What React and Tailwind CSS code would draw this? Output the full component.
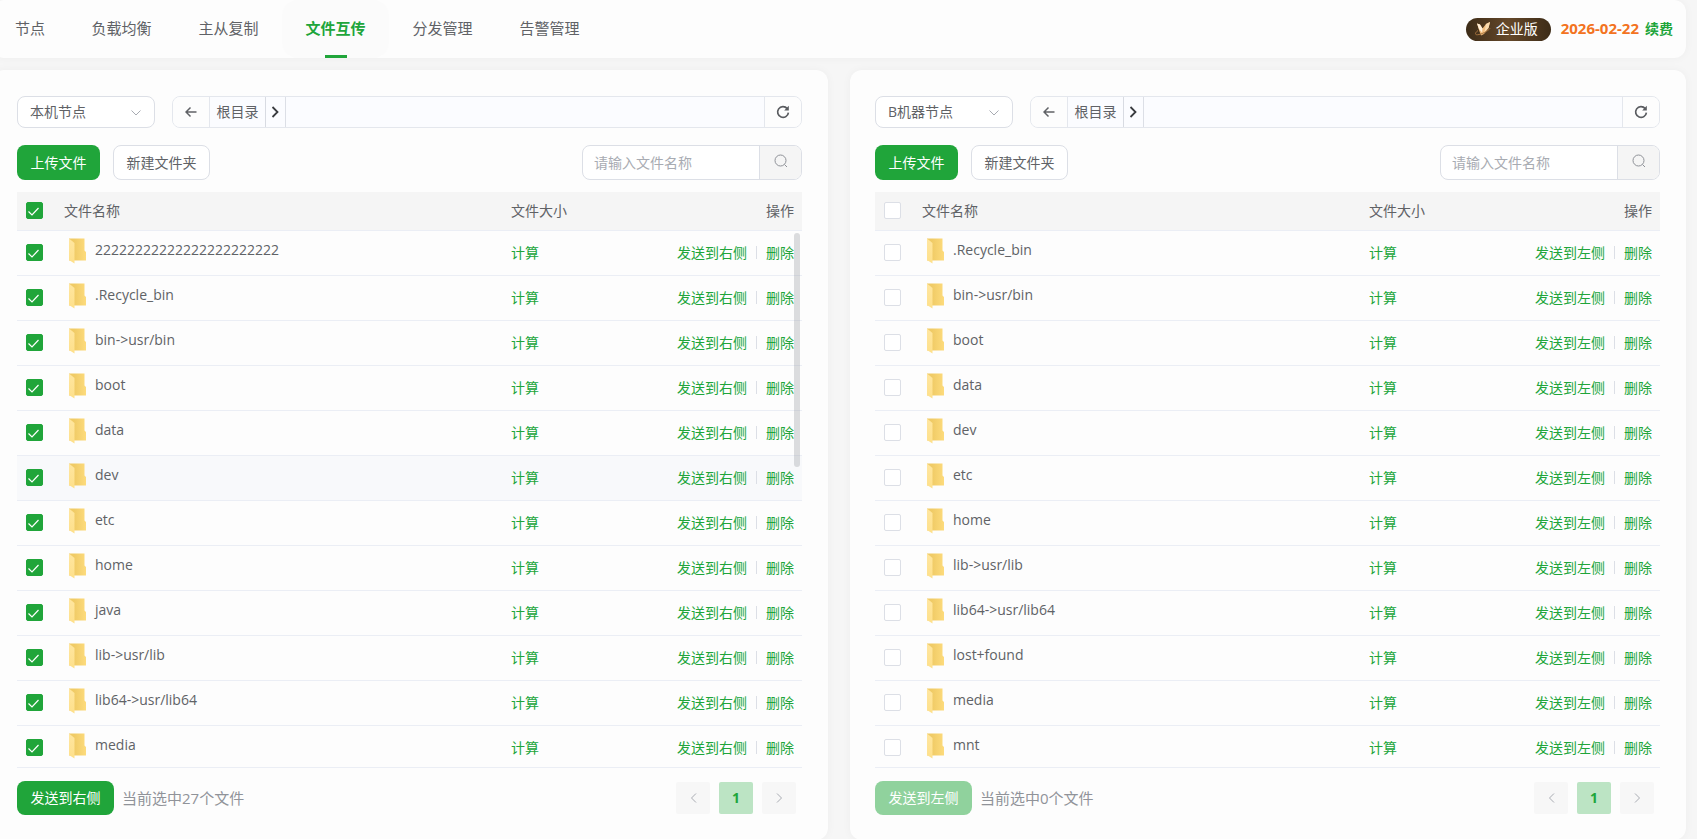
import React from 'react';

const leftFiles = [
    '22222222222222222222222', '.Recycle_bin', 'bin->usr/bin', 'boot', 'data', 'dev', 'etc',
    'home', 'java', 'lib->usr/lib', 'lib64->usr/lib64', 'media',
];

const rightFiles = [
    '.Recycle_bin', 'bin->usr/bin', 'boot', 'data', 'dev', 'etc', 'home',
    'lib->usr/lib', 'lib64->usr/lib64', 'lost+found', 'media', 'mnt',
];

const tabs = ['节点', '负载均衡', '主从复制', '文件互传', '分发管理', '告警管理'];

const FolderIcon = () => (
    <svg className="shrink-0" width="18" height="26" viewBox="0 0 18 26" aria-hidden="true">
        <defs>
            <linearGradient id="folderBack" x1="0" y1="0" x2="1" y2="0">
                <stop offset="0.3" stopColor="#f0cb66" />
                <stop offset="1" stopColor="#fddb7c" />
            </linearGradient>
            <linearGradient id="folderFront" x1="0" y1="0" x2="0" y2="1">
                <stop offset="0" stopColor="#ffe6a0" />
                <stop offset="1" stopColor="#fee08a" />
            </linearGradient>
        </defs>
        <path d="M0 0.500h15.500v12l1.500 1.500v8.500H0z" fill="url(#folderBack)" />
        <path d="M0 0.500L5.500 5v20.500L0 22z" fill="url(#folderFront)" />
    </svg>
);

const Checkbox = ({ id, checked, label }) => (
    <span className="relative block h-[17px] w-[17px]">
        <input
            id={id}
            type="checkbox"
            defaultChecked={checked}
            aria-label={label}
            className="peer block h-[17px] w-[17px] appearance-none rounded-[2px] border border-[#dcdfe6] bg-white checked:border-[#20a53a] checked:bg-[#20a53a]"
        />
        <svg className="pointer-events-none absolute inset-0 hidden peer-checked:block" width="17" height="17" viewBox="0 0 17 17" fill="none" stroke="#fff" strokeWidth="1.2">
            <path d="M2.500 9.500l3.500 3.500 6.500-7" />
        </svg>
    </span>
);

const Panel = ({ id, node, files, checked, hovered, action, count, scroll }) => (
    <section className="rounded-xl bg-[#fdfdfd] pt-[26px] pr-[26px] pb-[25px] pl-[25px] shadow-[0_0_10px_rgba(0,0,0,0.04)]">
        {/* Path bar */}
        <div className="flex h-8 gap-[17px]">
            <div className="relative w-[138px] shrink-0">
                <select aria-label="节点" className="h-8 w-full appearance-none rounded-lg border border-[#dcdfe6] bg-white pr-8 pl-3 text-sm text-[#606266]">
                    <option>{node}</option>
                </select>
                <svg className="pointer-events-none absolute top-3 right-[14px] h-[10px] w-[10px]" viewBox="0 0 10 10" fill="none" stroke="#a8abb2">
                    <path d="M0.500 2.500L5 7l4.500-4.500" />
                </svg>
            </div>
            <div className="flex min-w-0 flex-1 overflow-hidden rounded-lg border border-[#e4e7ed] bg-[#fbfcff] text-[#606266]">
                <button aria-label="返回" className="flex w-[37px] items-center justify-center border-r border-[#e4e7ed] bg-[#fdfdfd]">
                    <svg width="12" height="12" viewBox="0 0 12 12" fill="none" stroke="#606266" strokeWidth="1.5">
                        <path d="M11.500 6H1.500M5.500 1.500L1 6l4.500 4.500" />
                    </svg>
                </button>
                <button className="w-14 border-r border-[#d8dbe2] text-sm">根目录</button>
                <button aria-label="展开" className="flex w-5 items-center justify-center border-r border-[#dcdfe6] pr-px">
                    <svg width="8" height="12" viewBox="0 0 8 12" fill="none" stroke="#3a3c40" strokeWidth="1.8">
                        <path d="M1.500 1L6.500 6l-5 5" />
                    </svg>
                </button>
                <button aria-label="刷新" className="ml-auto flex w-[37px] items-center justify-center border-l border-[#e4e7ed] bg-[#fdfdfd]">
                    <svg width="14" height="14" viewBox="0 0 14 14" fill="none" stroke="#5a5c60" strokeWidth="1.7">
                        <path d="M11.200 3.600A5.400 5.400 0 1 0 12.400 7.600" />
                        <path d="M12.800 0.800v4.700H8.200z" fill="#5a5c60" stroke="none" />
                    </svg>
                </button>
            </div>
        </div>

        {/* Actions */}
        <div className="mt-[17px] flex h-[35px] text-sm">
            <button className="w-[83px] rounded-lg bg-[#20a53a] text-white">上传文件</button>
            <button className="ml-[13px] w-[97px] rounded-lg border border-[#dcdfe6] bg-white text-[#606266]">新建文件夹</button>
            <div className="ml-auto flex w-[220px] overflow-hidden rounded-lg border border-[#dcdfe6] bg-white">
                <input type="text" aria-label="搜索文件" placeholder="请输入文件名称" className="min-w-0 flex-1 pl-[11px] outline-none placeholder:text-[#a8abb2]" />
                <button aria-label="搜索" className="flex w-[42px] items-center justify-center border-l border-[#dcdfe6] bg-[#f5f5f5] pb-1">
                    <svg width="14" height="14" viewBox="0 0 14 14" fill="none" stroke="#8f9298">
                        <circle cx="6.500" cy="6.500" r="5.500" />
                        <path d="M10.500 10.500l2.500 2.500" />
                    </svg>
                </button>
            </div>
        </div>

        {/* File list */}
        <div className="relative mt-3 h-[576px] overflow-hidden border-b border-[#ebeef5] text-sm text-[#606266]">
            <table className="w-full table-fixed border-collapse">
                <thead>
                    <tr className="h-[38px] border-b border-[#ebeef5] bg-[#f5f5f5] text-left">
                        <th className="w-[47px] pl-[9px]"><Checkbox checked={checked} label="全选" /></th>
                        <th className="font-normal">文件名称</th>
                        <th className="w-[120px] font-normal">文件大小</th>
                        <th className="w-[171px] pr-2 text-right font-normal">操作</th>
                    </tr>
                </thead>
                <tbody>
                    {files.map((name) => (
                        <tr key={name} className={name === hovered ? 'h-[45px] border-b border-[#ebeef5] bg-[#f8f9fb]' : 'h-[45px] border-b border-[#ebeef5]'}>
                            <td className="pl-[9px]"><Checkbox id={id + name} checked={checked} /></td>
                            <td>
                                <div className="flex gap-2 pb-1 pl-[5px]">
                                    <FolderIcon />
                                    <label htmlFor={id + name} className="leading-6">{name}</label>
                                </div>
                            </td>
                            <td className="text-[#20a53a]"><button>计算</button></td>
                            <td className="pr-2 text-[#20a53a]">
                                <div className="flex items-center justify-end">
                                    <button>{action}</button>
                                    <span className="mx-[9px] h-[13px] w-px bg-[#dcdfe6]" />
                                    <button>删除</button>
                                </div>
                            </td>
                        </tr>
                    ))}
                </tbody>
            </table>
            {scroll && <div className="absolute top-[41px] right-[2px] h-[234px] w-[6px] rounded-full bg-[#909399]/30" />}
        </div>

        {/* Footer */}
        <div className="mt-[13px] flex items-center">
            <button disabled={!checked} className="h-[34px] w-[97px] rounded-lg bg-[#20a53a] text-sm text-white disabled:bg-[#90d29d]">{action}</button>
            <span className="ml-2 text-[15px] text-[#909399]">当前选中{count}个文件</span>
            <nav aria-label="分页" className="mr-[6px] ml-auto flex gap-[9px]">
                <button aria-label="上一页" className="flex h-8 w-[34px] items-center justify-center rounded-[2px] bg-[#f7f7f7]">
                    <svg width="7" height="10" viewBox="0 0 7 10" fill="none" stroke="#a8abb2"><path d="M6 0.500L1.500 5 6 9.500" /></svg>
                </button>
                <button className="h-8 w-[34px] rounded-[2px] bg-[#bce4c4] text-sm font-bold text-[#20a53a]">1</button>
                <button aria-label="下一页" className="flex h-8 w-[34px] items-center justify-center rounded-[2px] bg-[#f7f7f7]">
                    <svg width="7" height="10" viewBox="0 0 7 10" fill="none" stroke="#a8abb2"><path d="M1 0.500L5.500 5 1 9.500" /></svg>
                </button>
            </nav>
        </div>
    </section>
);

const App = () => {
    return (
        <div className="min-h-screen overflow-hidden bg-[#f6f6f6] font-['Open_Sans','Noto_Sans_CJK_SC',sans-serif]">
            <div className="mr-[11px] -ml-2">
                {/* Top navigation */}
                <header className="flex h-[58px] items-center justify-between rounded-xl bg-[#fdfdfd] shadow-[0_0_10px_rgba(0,0,0,0.04)]">
                    <nav className="flex h-full text-[15px] text-[#606266]">
                        {tabs.map((tab) => {
                            if (tab === '文件互传') {
                                return (
                                    <a key={tab} href="#" className="flex h-full w-[107px] flex-col items-center rounded-2xl bg-[#fbfbfb] font-bold text-[#20a53a]">
                                        <span className="flex flex-1 items-center pt-px">{tab}</span>
                                        <span className="h-[3px] w-[22px] bg-[#20a53a]" />
                                    </a>
                                );
                            }
                            return (
                                <a key={tab} href="#" className={tab === '节点' ? 'flex w-[76px] items-center justify-center pb-[2px]' : 'flex w-[107px] items-center justify-center pb-[2px]'}>
                                    {tab}
                                </a>
                            );
                        })}
                    </nav>
                    <div className="flex items-center pr-[13px] text-sm">
                        <span className="flex h-[23px] w-[85px] items-center gap-1 rounded-full bg-linear-to-r from-[#3d2c18] via-[#65482a] to-[#3d2c18] pl-2 text-white">
                            <svg width="18" height="16" viewBox="0 0 18 16" aria-hidden="true">
                                <path d="M3 2.500l3 1 2.500 4L12 3l4-2-1.500 6-4.500 6-3 1.500L5 9z" fill="#f2bd7e" />
                                <path d="M3 2.500l3 1 2.500 4-.5 4L5 8z" fill="#fff0da" />
                                <path d="M12 3l4-2-1.500 6-4 4z" fill="#fbdcb0" />
                                <path d="M4 9.500c-4 3-3 5 1 4 5-1 11-5 11-6.500" fill="none" stroke="#a8743f" />
                            </svg>
                            企业版
                        </span>
                        <span className="ml-[10px] text-[15px] font-bold text-[#f37321]">2026-02-22</span>
                        <a href="#" className="ml-[6px] font-bold text-[#20a53a]">续费</a>
                    </div>
                </header>

                {/* Panels */}
                <main className="mt-3 grid grid-cols-2 gap-[22px]">
                    <Panel id="left" node="本机节点" files={leftFiles} checked hovered="dev" action="发送到右侧" count={27} scroll />
                    <Panel id="right" node="B机器节点" files={rightFiles} checked={false} action="发送到左侧" count={0} />
                </main>
            </div>
        </div>
    );
};

export default App;
